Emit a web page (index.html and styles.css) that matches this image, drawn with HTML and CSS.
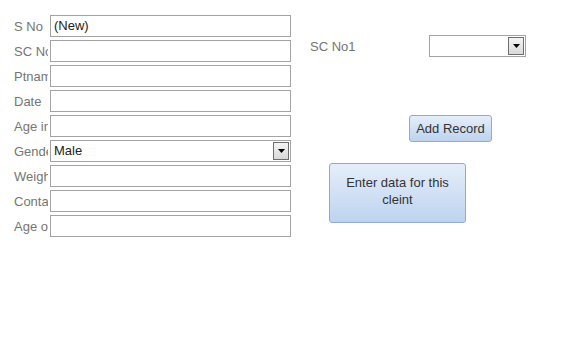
FILE: index.html
```html
<!DOCTYPE html>
<html>
  <head>
    <meta charset="utf-8">
    <title>Client Entry</title>
    <link rel="stylesheet" href="styles.css">
  </head>
  <body>
  <div id="form">
    <div class="fields">
      <div class="row"><label>S No</label><div class="box">(New)</div></div>
      <div class="row"><label>SC No</label><div class="box"></div></div>
      <div class="row"><label>Ptname</label><div class="box"></div></div>
      <div class="row"><label>Date</label><div class="box"></div></div>
      <div class="row"><label>Age in</label><div class="box"></div></div>
      <div class="row"><label>Gender</label>
        <div class="box combo"><span class="val">Male</span>
          <span class="drop"><svg width="7" height="4" viewBox="0 0 7 4"><path d="M0 0h7L3.5 4z" fill="#000"/></svg></span>
        </div>
      </div>
      <div class="row"><label>Weight</label><div class="box"></div></div>
      <div class="row"><label>Contact</label><div class="box"></div></div>
      <div class="row"><label>Age of</label><div class="box"></div></div>
    </div>

    <div class="side">
      <div class="lookup">
        <label>SC No1</label>
        <div class="box combo small"><span class="val"></span>
          <span class="drop"><svg width="7" height="4" viewBox="0 0 7 4"><path d="M0 0h7L3.5 4z" fill="#000"/></svg></span>
        </div>
      </div>
      <button class="btn add">Add Record</button>
      <button class="btn enter">Enter data for this cleint</button>
    </div>
  </div>
  </body>
</html>
```

FILE: styles.css
```css
body {
  margin: 0;
  background: #fff;
  font-family: "Liberation Sans", Arial, sans-serif;
  font-size: 13px;
}
#form {
  display: flex;
  align-items: flex-start;
}
.fields {
  padding: 15px 0 0 14px;
  display: flex;
  flex-direction: column;
  gap: 3px;
}
.row {
  display: flex;
  align-items: center;
  height: 22px;
}
.row label {
  width: 34px;
  margin-right: 2px;
  overflow: hidden;
  white-space: nowrap;
  color: #757575;
}
.box {
  box-sizing: border-box;
  width: 241px;
  height: 22px;
  border: 1px solid #a3a3a3;
  padding: 0 3px;
  line-height: 20px;
  color: #222;
  background: #fff;
}
.combo {
  display: flex;
  justify-content: space-between;
  padding-right: 1px;
  padding-top: 1px;
}
.combo .val {
  line-height: 18px;
}
.drop {
  box-sizing: border-box;
  width: 16px;
  height: 18px;
  border: 1px solid #6e6e6e;
  background: linear-gradient(#f4f4f4, #d9d9d9);
  display: flex;
  align-items: center;
  justify-content: center;
}
.side {
  margin-left: 19px;
  padding-top: 35px;
  display: flex;
  flex-direction: column;
  align-items: flex-start;
}
.lookup {
  display: flex;
  align-items: center;
}
.lookup label {
  width: 119px;
  color: #757575;
}
.box.small {
  width: 97px;
}
.btn {
  box-sizing: border-box;
  font-family: inherit;
  font-size: 13px;
  color: #333;
  border: 1px solid #8eaad5;
  border-radius: 3px;
  background: linear-gradient(#e6eefa, #bdd3ef);
  padding: 0;
}
.btn.add {
  margin: 58px 0 0 99px;
  width: 83px;
  height: 27px;
}
.btn.enter {
  margin: 21px 0 0 19px;
  width: 137px;
  height: 60px;
  line-height: 17px;
  padding: 0 10px 4px;
}
```
